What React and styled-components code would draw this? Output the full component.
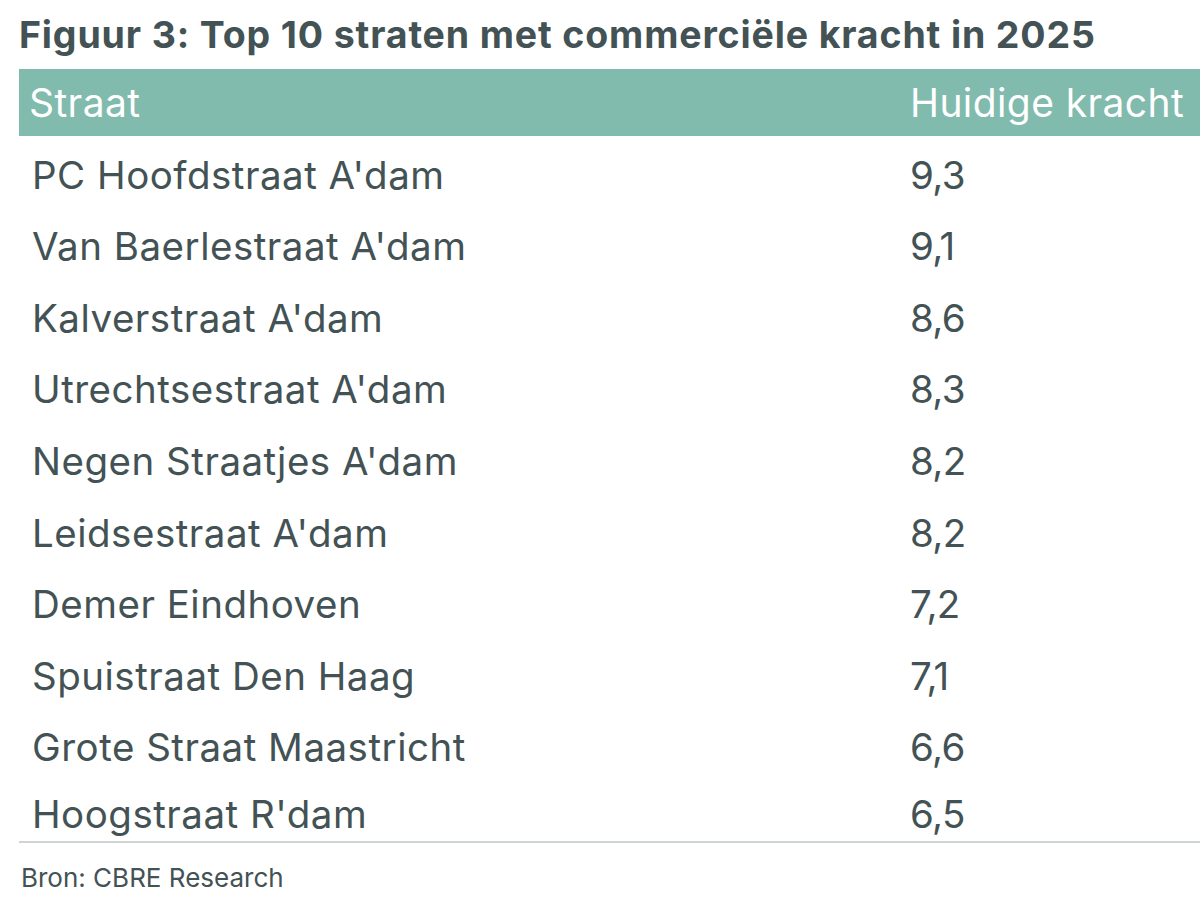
import styled, { createGlobalStyle } from 'styled-components';

const GlobalStyle = createGlobalStyle`
  body {
    margin: 0;
    background: #ffffff;
    font-family: Inter, Roboto, "Liberation Sans", sans-serif;
    color: #435254;
  }
`;

const Figure = styled.div`
  width: 1200px;
  height: 910px;
  padding-left: 19px;
  box-sizing: border-box;
  overflow: hidden;
`;

const Title = styled.h1`
  margin: 0;
  height: 69px;
  padding-top: 16px;
  box-sizing: border-box;
  font-size: 37.5px;
  line-height: 1;
  font-weight: 700;
  letter-spacing: 0.85px;
  white-space: nowrap;
  color: #435254;
`;

const HeaderBar = styled.div`
  display: grid;
  grid-template-columns: 891px 1fr;
  height: 67px;
  align-items: center;
  background: #80bbad;
  color: #ffffff;
  font-size: 39px;
  line-height: 1;
  letter-spacing: 0.4px;
`;

const HeaderCell = styled.div`
  padding-left: ${(p) => p.$inset || 0}px;
  white-space: nowrap;
`;

const Body = styled.div`
  padding-top: 3px;
  border-bottom: 2px solid #cfd4d6;
`;

const Row = styled.div`
  display: grid;
  grid-template-columns: 891px 1fr;
  height: 71.6px;
  align-items: center;
  font-size: 38.5px;
  line-height: 1;
  letter-spacing: 0.5px;
  color: #435254;

  &:last-child {
    height: 57.6px;
    align-items: start;
    padding-top: 12px;
    box-sizing: border-box;
  }
`;

const Cell = styled.div`
  padding-left: ${(p) => p.$inset || 0}px;
  white-space: nowrap;
`;

const Score = styled(Cell)`
  letter-spacing: -0.6px;
`;

const Source = styled.div`
  padding: 22px 0 0 2px;
  font-size: 26px;
  line-height: 1;
  letter-spacing: 0;
  color: #435254;
`;

const rows = [
  ['PC Hoofdstraat A\'dam', '9,3'],
  ['Van Baerlestraat A\'dam', '9,1'],
  ['Kalverstraat A\'dam', '8,6'],
  ['Utrechtsestraat A\'dam', '8,3'],
  ['Negen Straatjes A\'dam', '8,2'],
  ['Leidsestraat A\'dam', '8,2'],
  ['Demer Eindhoven', '7,2'],
  ['Spuistraat Den Haag', '7,1'],
  ['Grote Straat Maastricht', '6,6'],
  ['Hoogstraat R\'dam', '6,5'],
];

export default function App() {
  return (
    <>
      <GlobalStyle />
      <Figure>
        <Title>Figuur 3: Top 10 straten met commerciële kracht in 2025</Title>
        <HeaderBar>
          <HeaderCell $inset={10}>Straat</HeaderCell>
          <HeaderCell>Huidige kracht</HeaderCell>
        </HeaderBar>
        <Body>
          {rows.map(([street, score]) => (
            <Row key={street}>
              <Cell $inset={13}>{street}</Cell>
              <Score>{score}</Score>
            </Row>
          ))}
        </Body>
        <Source>Bron: CBRE Research</Source>
      </Figure>
    </>
  );
}
